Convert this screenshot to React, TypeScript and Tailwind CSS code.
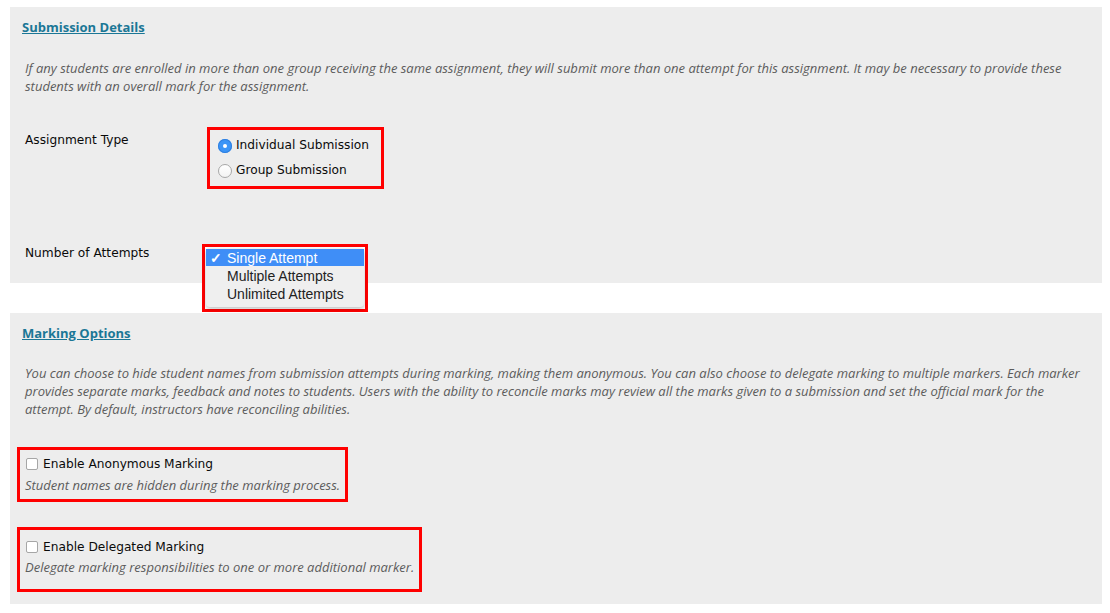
import React from "react";

const lucida = { fontFamily: '"DejaVu Sans", sans-serif' };

function Radio({ checked }: { checked: boolean }) {
  return checked ? (
    <span className="inline-flex h-[14px] w-[14px] items-center justify-center rounded-full bg-[#3b95f7] shadow-[inset_0_0_0_1px_#2f7fe0]">
      <span className="h-[4px] w-[4px] rounded-full bg-white" />
    </span>
  ) : (
    <span className="inline-block h-[14px] w-[14px] rounded-full border border-[#a8a8a8] bg-gradient-to-b from-white to-[#f3f3f3]" />
  );
}

function Checkbox() {
  return (
    <span className="inline-block h-[12px] w-[12px] rounded-[2px] border border-[#a6a6a6] bg-white" />
  );
}

export default function App() {
  return (
    <div className="min-h-[613px] w-[1110px] bg-white pl-[10px] pt-[7px] font-['Open_Sans',sans-serif]">
      {/* Submission Details */}
      <div className="w-[1092px] bg-[#ededed] px-[12px] pt-[12px] h-[276px]">
        <div className="h-[16px] text-[13px] font-bold leading-[16px] text-[#1b7796] underline">
          Submission Details
        </div>
        <p className="mt-[24px] pl-[3px] text-[13px] italic leading-[18px] text-[#5c5c5c]">
          If any students are enrolled in more than one group receiving the same assignment, they will submit more than one attempt for this assignment. It may be necessary to provide these students with an overall mark for the assignment.
        </p>
        <div className="mt-[32px] flex">
          <div className="w-[185px] pl-[3px] pt-[5px] text-[12.2px] leading-[16px] text-[#0a0a0a]" style={lucida}>
            Assignment Type
          </div>
          <div className="h-[62px] w-[177px] border-[3px] border-[#ff0000] pt-[3px] pl-[8px]" style={lucida}>
            <label className="flex h-[25px] items-center gap-[4px] text-[12.2px] text-[#0a0a0a]">
              <Radio checked />
              <span>Individual Submission</span>
            </label>
            <label className="flex h-[25px] items-center gap-[4px] text-[12.2px] text-[#0a0a0a]">
              <Radio checked={false} />
              <span>Group Submission</span>
            </label>
          </div>
        </div>
        <div className="relative mt-[55px] flex">
          <div className="w-[180px] pl-[3px] pt-[1px] text-[12.2px] leading-[16px] text-[#0a0a0a]" style={lucida}>
            Number of Attempts
          </div>
          <div className="absolute left-[180px] top-0 h-[68px] w-[166px] border-[3px] border-[#ff0000] bg-white p-[1px] font-['Liberation_Sans',sans-serif]">
            <div className="h-[59px] rounded-[4px] bg-[#efefef] pt-[1px] shadow-[0_2px_4px_rgba(0,0,0,0.25)]">
              <div className="flex h-[17px] items-center bg-[#3f8ef7] pl-[4px] pt-[1px] text-[14px] text-white">
                <span className="w-[17px] text-[14px] font-bold">✓</span>
                <span>Single Attempt</span>
              </div>
              <div className="flex h-[18px] items-center pl-[21px] pt-[2px] text-[14px] text-[#222]">
                Multiple Attempts
              </div>
              <div className="flex h-[18px] items-center pl-[21px] pt-[2px] text-[14px] text-[#222]">
                Unlimited Attempts
              </div>
            </div>
          </div>
        </div>
      </div>

      {/* Marking Options */}
      <div className="mt-[30px] w-[1092px] bg-[#ededed] px-[12px] pt-[12px] pb-[12px]">
        <div className="h-[16px] text-[13px] font-bold leading-[16px] text-[#1b7796] underline">
          Marking Options
        </div>
        <p className="mt-[23px] pl-[3px] text-[13px] italic leading-[18px] text-[#5c5c5c]">
          You can choose to hide student names from submission attempts during marking, making them anonymous. You can also choose to delegate marking to multiple markers. Each marker provides separate marks, feedback and notes to students. Users with the ability to reconcile marks may review all the marks given to a submission and set the official mark for the attempt. By default, instructors have reconciling abilities.
        </p>
        <div className="-ml-[5px] mt-[29px] h-[55px] w-[331px] border-[3px] border-[#ff0000] pl-[5px] pt-[5px]">
          <label className="flex h-[18px] items-center gap-[5px] pl-[1px] text-[12.2px] text-[#0a0a0a]" style={lucida}>
            <Checkbox />
            <span>Enable Anonymous Marking</span>
          </label>
          <div className="mt-[3px] text-[13px] italic leading-[18px] text-[#5c5c5c]">
            Student names are hidden during the marking process.
          </div>
        </div>
        <div className="-ml-[5px] mt-[25px] h-[65px] w-[405px] border-[3px] border-[#ff0000] pl-[5px] pt-[8px]">
          <label className="flex h-[18px] items-center gap-[5px] pl-[1px] text-[12.2px] text-[#0a0a0a]" style={lucida}>
            <Checkbox />
            <span>Enable Delegated Marking</span>
          </label>
          <div className="mt-[2px] text-[13px] italic leading-[18px] text-[#5c5c5c]">
            Delegate marking responsibilities to one or more additional marker.
          </div>
        </div>
      </div>
    </div>
  );
}
